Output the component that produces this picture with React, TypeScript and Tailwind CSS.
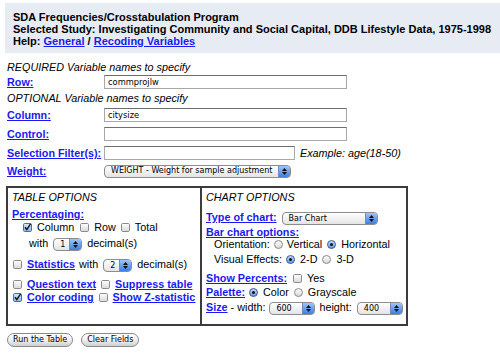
import React from "react";

const LINK = "text-[#1a1aee] underline font-bold";

function Check({ checked = false }: { checked?: boolean }) {
  return (
    <svg width="9" height="9" viewBox="0 0 9 9" className="shrink-0">
      <defs>
        <linearGradient id={checked ? "cbc" : "cbu"} x1="0" y1="0" x2="0" y2="1">
          <stop offset="0" stopColor={checked ? "#dbe8fb" : "#ffffff"} />
          <stop offset="1" stopColor={checked ? "#8db4ea" : "#d8d8d8"} />
        </linearGradient>
      </defs>
      <rect x="0.5" y="0.5" width="8" height="8" rx="1.2" fill={`url(#${checked ? "cbc" : "cbu"})`} stroke={checked ? "#4a6fa8" : "#8a8a8a"} />
      {checked && <path d="M2 4.3 L3.8 6.6 L7.6 0.8" fill="none" stroke="#111" strokeWidth="1.4" />}
    </svg>
  );
}

function Radio({ on = false }: { on?: boolean }) {
  return (
    <svg width="9" height="9" viewBox="0 0 9 9" className="shrink-0">
      <defs>
        <linearGradient id={on ? "rdon" : "rdoff"} x1="0" y1="0" x2="0" y2="1">
          <stop offset="0" stopColor={on ? "#c9dcf7" : "#ffffff"} />
          <stop offset="1" stopColor={on ? "#5f95e0" : "#d6d6d6"} />
        </linearGradient>
      </defs>
      <circle cx="4.5" cy="4.5" r="4" fill={`url(#${on ? "rdon" : "rdoff"})`} stroke={on ? "#3d5f98" : "#8a8a8a"} />
      {on && <circle cx="4.5" cy="4.5" r="1.5" fill="#111" />}
    </svg>
  );
}

function Sel({ value, w }: { value: string; w: string }) {
  return (
    <span
      className={`inline-flex h-[13px] ${w} shrink-0 items-stretch overflow-hidden rounded-[4px] border border-[#8c8c8c] bg-gradient-to-b from-white to-[#e4e4e4] font-['DejaVu_Sans',sans-serif] text-[8px] leading-none text-black`}
    >
      <span className="flex flex-1 items-center overflow-hidden whitespace-nowrap pl-[6px]">{value}</span>
      <span className="flex w-[12px] flex-col items-center justify-center gap-[1px] border-l border-[#6c8cc0] bg-gradient-to-b from-[#9fc4f5] to-[#3c7ee0]">
        <svg width="5" height="3" viewBox="0 0 5 3"><path d="M0 3 L2.5 0 L5 3Z" fill="#111" /></svg>
        <svg width="5" height="3" viewBox="0 0 5 3"><path d="M0 0 L2.5 3 L5 0Z" fill="#111" /></svg>
      </span>
    </span>
  );
}

function Input({ value = "", w }: { value?: string; w: string }) {
  return (
    <span
      className={`flex h-[14px] ${w} items-center border border-[#a8a8a8] border-t-[#6e6e6e] bg-white pl-[3px] font-['DejaVu_Sans',sans-serif] text-[8.3px] text-black`}
    >
      {value}
    </span>
  );
}

function Btn({ children }: { children: React.ReactNode }) {
  return (
    <span className="flex h-[14px] items-center rounded-full border border-[#8a8a8a] bg-gradient-to-b from-white via-[#f0f0f0] to-[#cfcfcf] px-[5px] font-['DejaVu_Sans',sans-serif] text-[8px] text-black">
      {children}
    </span>
  );
}

export default function App() {
  return (
    <div className="h-[353px] w-[500px] overflow-hidden bg-white font-['Liberation_Sans',Arial,sans-serif] text-[10.8px] text-black">
      {/* Header */}
      <div className="ml-[5px] mt-[3px] h-[50px] bg-[#e7ecf4] pl-[8px] pt-[8px] text-[11px] font-bold leading-[12px]">
        <div>SDA Frequencies/Crosstabulation Program</div>
        <div className="whitespace-nowrap">Selected Study: Investigating Community and Social Capital, DDB Lifestyle Data, 1975-1998</div>
        <div>
          Help: <span className={LINK}>General</span> / <span className={LINK}>Recoding Variables</span>
        </div>
      </div>

      {/* Variable form */}
      <div className="flex flex-col pl-[7px]">
        <div className="mt-[7px] flex h-[14px] items-center italic">REQUIRED Variable names to specify</div>
        <div className="mt-[1px] flex h-[14px] items-center">
          <span className={`w-[97px] ${LINK}`}>Row:</span>
          <Input value="commprojlw" w="w-[243px]" />
        </div>
        <div className="mt-[2px] flex h-[14px] items-center italic">OPTIONAL Variable names to specify</div>
        <div className="mt-[3px] flex h-[14px] items-center">
          <span className={`w-[97px] ${LINK}`}>Column:</span>
          <Input value="citysize" w="w-[243px]" />
        </div>
        <div className="mt-[5px] flex h-[14px] items-center">
          <span className={`w-[97px] ${LINK}`}>Control:</span>
          <Input w="w-[243px]" />
        </div>
        <div className="mt-[5px] flex h-[14px] items-center">
          <span className={`w-[97px] whitespace-nowrap ${LINK}`}>Selection Filter(s):</span>
          <Input w="w-[191px]" />
          <span className="ml-[5px] italic">Example: age(18-50)</span>
        </div>
        <div className="mt-[4px] flex h-[14px] items-center">
          <span className={`w-[97px] ${LINK}`}>Weight:</span>
          <Sel value="WEIGHT - Weight for sample adjustment" w="w-[187px]" />
        </div>
      </div>

      {/* Options box */}
      <div className="ml-[6px] mt-[8px] flex h-[140px] w-[402px] border-2 border-[#3c3c3c]">
        {/* Table options */}
        <div className="flex w-[194px] flex-col border-r-2 border-[#3c3c3c] pl-[4px] pt-[3px]">
          <div className="flex h-[12px] items-center italic">TABLE OPTIONS</div>
          <div className="mt-[5px] flex h-[12px] items-center">
            <span className={LINK}>Percentaging:</span>
          </div>
          <div className="ml-[11px] mt-[1px] flex h-[12px] items-center">
            <Check checked />
            <span className="ml-[5px]">Column</span>
            <span className="ml-[6px]"><Check /></span>
            <span className="ml-[5px]">Row</span>
            <span className="ml-[5px]"><Check /></span>
            <span className="ml-[5px]">Total</span>
          </div>
          <div className="ml-[17px] mt-[4px] flex h-[12px] items-center">
            <span>with</span>
            <span className="ml-[5px]"><Sel value="1" w="w-[29px]" /></span>
            <span className="ml-[5px]">decimal(s)</span>
          </div>
          <div className="ml-[1px] mt-[9px] flex h-[12px] items-center">
            <Check />
            <span className={`ml-[5px] ${LINK}`}>Statistics</span>
            <span className="ml-[4px]">with</span>
            <span className="ml-[5px]"><Sel value="2" w="w-[29px]" /></span>
            <span className="ml-[5px]">decimal(s)</span>
          </div>
          <div className="ml-[1px] mt-[8px] flex h-[12px] items-center whitespace-nowrap">
            <Check />
            <span className={`ml-[5px] ${LINK}`}>Question text</span>
            <span className="ml-[5px]"><Check /></span>
            <span className={`ml-[5px] ${LINK}`}>Suppress table</span>
          </div>
          <div className="ml-[1px] mt-[1px] flex h-[12px] items-center whitespace-nowrap">
            <Check checked />
            <span className={`ml-[5px] ${LINK}`}>Color coding</span>
            <span className="ml-[5px]"><Check /></span>
            <span className={`ml-[5px] ${LINK}`}>Show Z-statistic</span>
          </div>
        </div>

        {/* Chart options */}
        <div className="flex flex-1 flex-col pl-[4px] pt-[3px]">
          <div className="flex h-[12px] items-center italic">CHART OPTIONS</div>
          <div className="mt-[8px] flex h-[12px] items-center">
            <span className={LINK}>Type of chart:</span>
            <span className="ml-[5px]"><Sel value="Bar Chart" w="w-[96px]" /></span>
          </div>
          <div className="mt-[3px] flex h-[12px] items-center">
            <span className={LINK}>Bar chart options:</span>
          </div>
          <div className="ml-[8px] flex h-[12px] items-center whitespace-nowrap">
            <span>Orientation:</span>
            <span className="ml-[4px]"><Radio /></span>
            <span className="ml-[4px]">Vertical</span>
            <span className="ml-[5px]"><Radio on /></span>
            <span className="ml-[5px]">Horizontal</span>
          </div>
          <div className="ml-[8px] mt-[3px] flex h-[12px] items-center whitespace-nowrap">
            <span>Visual Effects:</span>
            <span className="ml-[4px]"><Radio on /></span>
            <span className="ml-[5px]">2-D</span>
            <span className="ml-[5px]"><Radio /></span>
            <span className="ml-[5px]">3-D</span>
          </div>
          <div className="mt-[7px] flex h-[12px] items-center">
            <span className={LINK}>Show Percents:</span>
            <span className="ml-[6px]"><Check /></span>
            <span className="ml-[5px]">Yes</span>
          </div>
          <div className="mt-[2px] flex h-[12px] items-center whitespace-nowrap">
            <span className={LINK}>Palette:</span>
            <span className="ml-[4px]"><Radio on /></span>
            <span className="ml-[5px]">Color</span>
            <span className="ml-[5px]"><Radio /></span>
            <span className="ml-[5px]">Grayscale</span>
          </div>
          <div className="mt-[3px] flex h-[12px] items-center whitespace-nowrap">
            <span className={LINK}>Size </span>
            <span>&nbsp;- width:</span>
            <span className="ml-[4px]"><Sel value="600" w="w-[46px]" /></span>
            <span className="ml-[4px]">height:</span>
            <span className="ml-[5px]"><Sel value="400" w="w-[46px]" /></span>
          </div>
        </div>
      </div>

      {/* Buttons */}
      <div className="ml-[7px] mt-[7px] flex gap-[8px]">
        <Btn>Run the Table</Btn>
        <Btn>Clear Fields</Btn>
      </div>
    </div>
  );
}
